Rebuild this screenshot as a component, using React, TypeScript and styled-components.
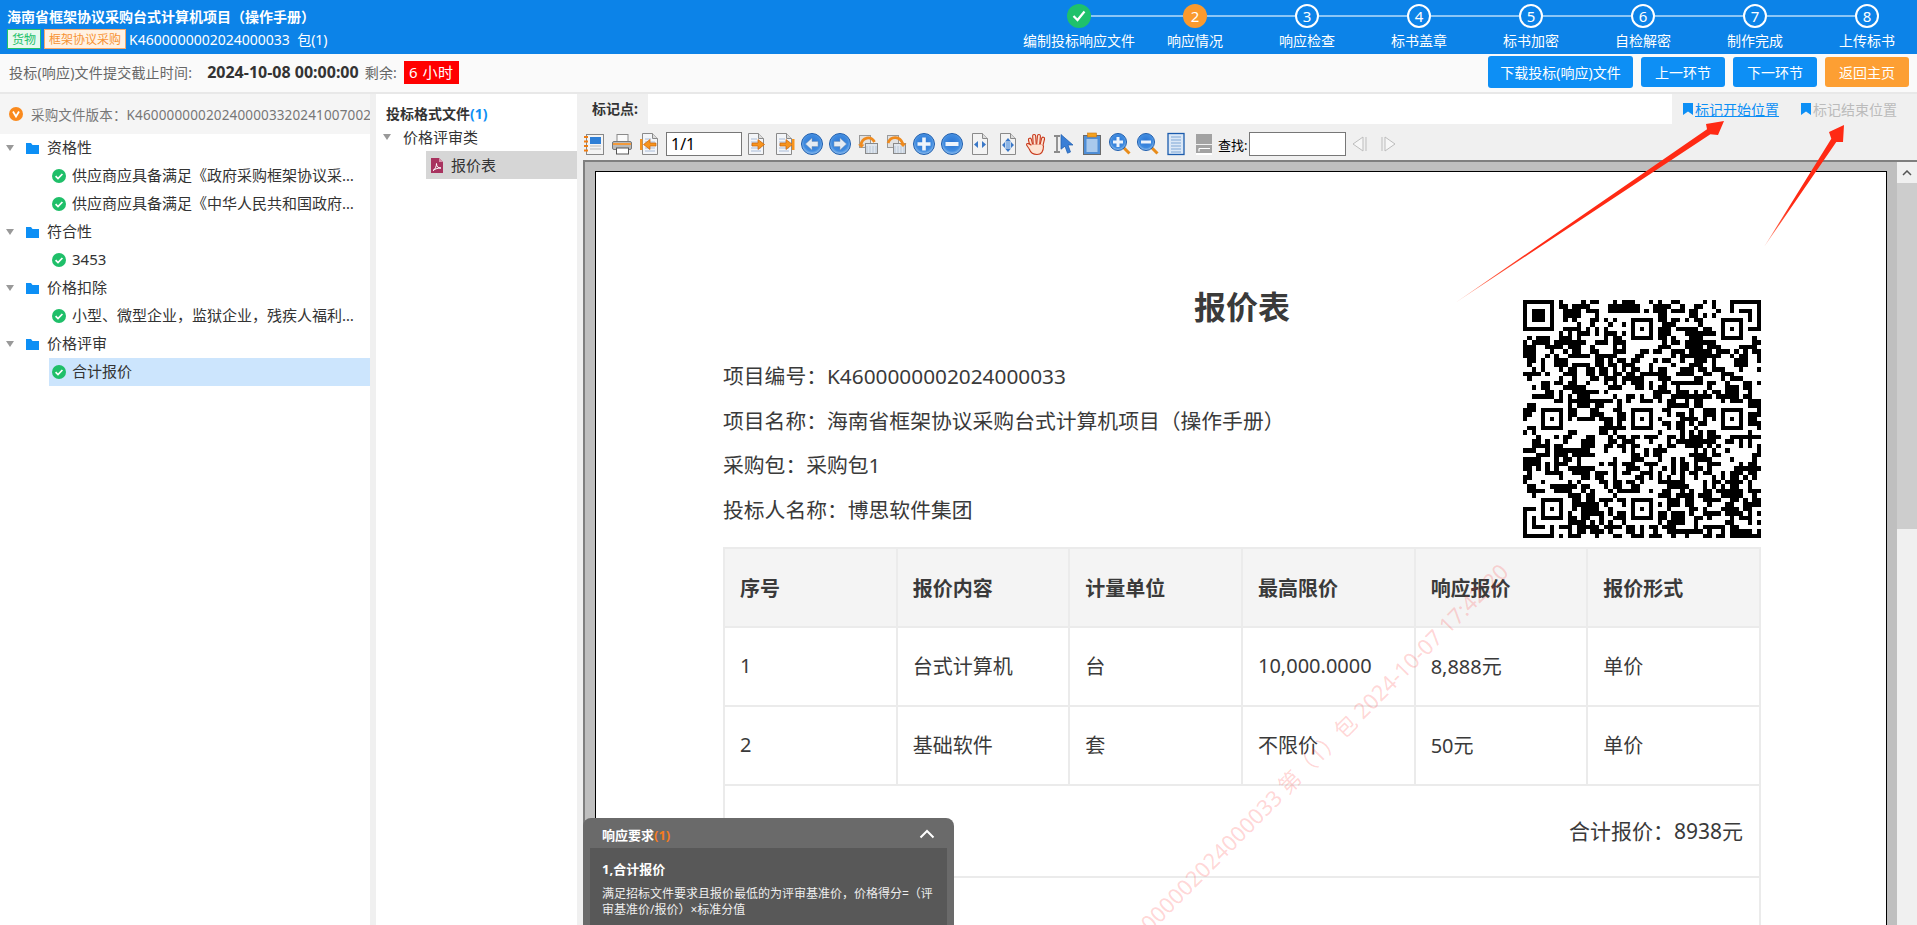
import React from 'react';
import styled, { createGlobalStyle } from 'styled-components';

const GlobalStyle = createGlobalStyle`
    html, body, #root {
        margin: 0;
        height: 100%;
    }
    body {
        font-family: "Noto Sans", "Noto Sans CJK SC", sans-serif;
        color: #333;
        background: #fff;
        overflow: hidden;
    }
    * {
        box-sizing: border-box;
    }
`;

const Shell = styled.div`
    position: relative;
    display: flex;
    flex-direction: column;
    height: 100vh;
    overflow: hidden;
`;

/* ---------- top bar ---------- */

const TopBar = styled.header`
    display: flex;
    flex: none;
    height: 54px;
    background: #0c83e8;
    color: #fff;
`;

const TitleBlock = styled.div`
    display: flex;
    flex-direction: column;
    padding: 7px 0 0 7px;
`;

const ProjectTitle = styled.div`
    font-size: 14px;
    font-weight: 700;
    line-height: 20px;
    white-space: nowrap;
`;

const TagRow = styled.div`
    display: flex;
    align-items: center;
    margin-top: 2px;
    height: 20px;
`;

const Tag = styled.span<{ $tone: 'green' | 'orange' }>`
    display: flex;
    align-items: center;
    height: 20px;
    padding: 0 4px;
    margin-right: 3px;
    font-size: 12px;
    border: 1px solid ${props => props.$tone === 'green' ? '#1fc16b' : '#f9a869'};
    background: ${props => props.$tone === 'green' ? '#e8f9ef' : '#fff2e4'};
    color: ${props => props.$tone === 'green' ? '#1fc16b' : '#f79233'};
`;

const ProjectNo = styled.span`
    font-size: 14px;
    white-space: pre;
`;

const Steps = styled.ol`
    display: flex;
    flex: none;
    list-style: none;
    margin: 0 -6px 0 auto;
    padding: 4px 0 0;
`;

const Step = styled.li`
    position: relative;
    display: flex;
    flex-direction: column;
    align-items: center;
    width: 112px;
    &:first-child {
        margin-right: 4px;
    }
    &:not(:last-child)::after {
        content: '';
        position: absolute;
        top: 11px;
        left: 68px;
        width: 88px;
        height: 2px;
        background: #8cc6f6;
    }
    &:first-child::after {
        width: 92px;
    }
`;

const StepDot = styled.span<{ $state: 'done' | 'active' | 'todo' }>`
    display: flex;
    align-items: center;
    justify-content: center;
    width: 24px;
    height: 24px;
    border-radius: 50%;
    font-size: 15px;
    line-height: 1;
    border: ${props => props.$state === 'todo' ? '2px solid #fff' : 'none'};
    background: ${props => props.$state === 'done' ? '#1fc16b' : props.$state === 'active' ? '#fa9a2e' : 'transparent'};
`;

const StepLabel = styled.span`
    margin-top: 3px;
    font-size: 14px;
    line-height: 20px;
    white-space: nowrap;
`;

/* ---------- deadline bar ---------- */

const DeadlineBar = styled.div`
    display: flex;
    align-items: center;
    flex: none;
    height: 40px;
    padding: 0 8px 2px 9px;
    background: #fafafa;
    border-bottom: 2px solid #e8e8e8;
`;

const DeadlineLabel = styled.span`
    font-size: 14px;
    letter-spacing: 0.2px;
    color: #666;
    white-space: nowrap;
`;

const DeadlineTime = styled.strong`
    margin: 0 6px 0 15px;
    font-size: 16px;
    color: #333;
    white-space: nowrap;
`;

const Remain = styled.span`
    margin-left: 7px;
    padding: 0 5px;
    height: 23px;
    line-height: 23px;
    font-size: 15px;
    letter-spacing: 0.5px;
    color: #fff;
    background: #ff0000;
    white-space: pre;
`;

const BarButtons = styled.div`
    display: flex;
    align-items: center;
    gap: 8px;
    margin-left: auto;
`;

const BarButton = styled.button<{ $width: number; $orange?: boolean }>`
    width: ${props => props.$width}px;
    height: ${props => props.$width > 100 ? 32 : 30}px;
    padding: 0;
    border: none;
    border-radius: 3px;
    font-family: inherit;
    font-size: 14px;
    color: #fff;
    background: ${props => props.$orange ? '#fd9f33' : '#0d8ff5'};
`;

/* ---------- main columns ---------- */

const Columns = styled.main`
    display: flex;
    flex: 1;
    min-height: 0;
`;

const LeftPanel = styled.section`
    flex: none;
    width: 370px;
    overflow: hidden;
`;

const Splitter = styled.div`
    flex: none;
    width: 6px;
    background: #f0f0f0;
`;

const VersionRow = styled.div`
    display: flex;
    align-items: center;
    height: 40px;
    padding-left: 9px;
    gap: 8px;
    background: #f5f5f5;
    font-size: 13.5px;
    letter-spacing: 0.15px;
    color: #777;
    white-space: nowrap;
`;

const GroupRow = styled.div`
    display: flex;
    align-items: center;
    height: 28px;
    padding-left: 6px;
    font-size: 15px;
    line-height: 20px;
`;

const Caret = styled.span`
    width: 0;
    height: 0;
    margin-right: 12px;
    border-left: 4.5px solid transparent;
    border-right: 4.5px solid transparent;
    border-top: 6px solid #999;
`;

const GroupLabel = styled.span`
    margin: 0 0 2px 8px;
`;

const LeafRow = styled.div<{ $active?: boolean }>`
    display: flex;
    align-items: center;
    height: 28px;
    margin-left: 49px;
    padding-left: 3px;
    font-size: 15px;
    line-height: 20px;
    background: ${props => props.$active ? '#cce5fd' : 'transparent'};
`;

const LeafLabel = styled.span`
    margin: 0 0 2px 6px;
    max-width: 283px;
    overflow: hidden;
    white-space: nowrap;
    text-overflow: ellipsis;
`;

const MidPanel = styled.section`
    flex: none;
    width: 201px;
    padding-top: 10px;
`;

const MidTitle = styled.div`
    padding-left: 10px;
    font-size: 14px;
    font-weight: 700;
    line-height: 19px;
    span {
        color: #0d8ff5;
    }
`;

const MidGroup = styled.div`
    display: flex;
    align-items: center;
    height: 28px;
    padding-left: 7px;
    font-size: 15px;
    line-height: 20px;
`;

const FileRow = styled.div`
    display: flex;
    align-items: center;
    height: 28px;
    margin-left: 50px;
    padding-left: 5px;
    gap: 8px;
    font-size: 15px;
    line-height: 20px;
    background: #d6d6d6;
`;

/* ---------- document side ---------- */

const RightPanel = styled.section`
    position: relative;
    display: flex;
    flex-direction: column;
    flex: 1;
    min-width: 0;
    background: #f0f0f0;
`;

const MarkBar = styled.div`
    display: flex;
    flex: none;
    height: 30px;
`;

const MarkLabel = styled.div`
    width: 71px;
    padding-left: 15px;
    font-size: 14px;
    font-weight: 700;
    line-height: 30px;
    white-space: nowrap;
`;

const MarkField = styled.div`
    flex: 1;
    background: #fff;
`;

const MarkLinks = styled.div`
    display: flex;
    width: 245px;
    padding: 6px 0 0 11px;
    gap: 22px;
`;

const MarkLink = styled.a<{ $disabled?: boolean }>`
    display: flex;
    align-items: flex-start;
    gap: 2px;
    height: 21px;
    font-size: 14px;
    line-height: 20px;
    white-space: nowrap;
    color: ${props => props.$disabled ? '#bbb' : '#0d8ff5'};
    text-decoration: ${props => props.$disabled ? 'none' : 'underline'};
    svg {
        margin-top: 3px;
    }
`;

const PdfToolbar = styled.div`
    display: flex;
    align-items: center;
    flex: none;
    height: 36px;
    padding: 4px 0 0 3px;
`;

const ToolSlot = styled.span`
    display: flex;
    align-items: center;
    justify-content: center;
    flex: none;
    width: 28px;
    height: 26px;
`;

const ToolInput = styled.input<{ $width: number }>`
    flex: none;
    width: ${props => props.$width}px;
    height: 24px;
    margin-left: 2px;
    padding: 0 4px;
    border: 1px solid #777;
    font-family: inherit;
    font-size: 16px;
    color: #000;
    background: #fff;
    outline: none;
`;

const FindLabel = styled.span`
    flex: none;
    width: 29px;
    font-size: 13px;
    color: #000;
    white-space: nowrap;
`;

const Viewer = styled.div`
    display: flex;
    flex: 1;
    min-height: 0;
    margin-left: 6px;
    background: #bfbfbf;
    border-top: 2px solid #7f7f7f;
    border-left: 2px solid #7f7f7f;
`;

const PageArea = styled.div`
    flex: 1;
    min-width: 0;
    padding: 9px 10px 0 10px;
    overflow: hidden;
`;

const Page = styled.article`
    position: relative;
    height: 1000px;
    padding: 115px 125px 0 127px;
    background: #fff;
    border: 1px solid #000;
    overflow: hidden;
    color: #3a3a3a;
`;

const DocHead = styled.div`
    display: grid;
    grid-template-columns: 1fr 238px;
    grid-template-rows: 40px auto;
`;

const DocTitle = styled.h1`
    grid-column: 1 / -1;
    grid-row: 1;
    margin: 0;
    font-size: 32px;
    font-weight: 700;
    line-height: 40px;
    text-align: center;
`;

const QrBox = styled.div`
    grid-column: 2;
    grid-row: 1 / span 2;
    width: 238px;
    height: 238px;
    margin-top: 13px;
`;

const DocInfo = styled.div`
    grid-column: 1;
    grid-row: 2;
    padding-top: 27px;
    font-size: 20.8px;
    line-height: 44.5px;
    white-space: nowrap;
`;

const PriceTable = styled.table`
    width: 100%;
    margin-top: 9px;
    border-collapse: collapse;
    table-layout: fixed;
    font-size: 20px;
    color: #3a3a3a;
    th, td {
        height: 79px;
        padding: 0 15px;
        border: 2px solid #ebebeb;
        text-align: left;
    }
    td {
        padding-bottom: 3px;
    }
    th {
        background: #f4f4f4;
        font-weight: 700;
    }
`;

const TotalCell = styled.td`
    && {
        height: 92px;
        font-size: 21px;
        text-align: right;
        padding-right: 16px;
    }
`;

const BlankCell = styled.td`
    && {
        height: 200px;
    }
`;

const Watermark = styled.div`
    position: absolute;
    top: 382px;
    right: 382px;
    font-size: 22px;
    line-height: 26px;
    color: rgba(255, 50, 50, 0.2);
    white-space: pre;
    transform: rotate(-45deg);
    transform-origin: right center;
    pointer-events: none;
`;

const Scrollbar = styled.div`
    display: flex;
    flex-direction: column;
    flex: none;
    width: 20px;
    background: #f0f0f0;
`;

const ScrollUp = styled.div`
    display: flex;
    align-items: center;
    justify-content: center;
    height: 21px;
`;

const ScrollThumb = styled.div`
    height: 346px;
    background: #cdcdcd;
`;

const Popup = styled.aside`
    position: absolute;
    left: 6px;
    bottom: 0;
    width: 371px;
    height: 107px;
    padding: 0 7px;
    border-radius: 8px 8px 0 0;
    background: #6a6a6a;
    color: #fff;
    overflow: hidden;
`;

const PopupHead = styled.div`
    display: flex;
    align-items: center;
    justify-content: space-between;
    height: 30px;
    padding: 2px 12px 0 12px;
    font-size: 13px;
    font-weight: 700;
    span {
        color: #f57c1f;
    }
`;

const PopupBody = styled.div`
    height: 77px;
    padding: 11px 12px 0 12px;
    background: #585858;
`;

const PopupTitle = styled.div`
    font-size: 13px;
    font-weight: 700;
    line-height: 20px;
`;

const PopupText = styled.div`
    margin-top: 7px;
    font-size: 12px;
    line-height: 16px;
    color: #eee;
`;

const ArrowLayer = styled.svg`
    position: absolute;
    top: 0;
    left: 0;
    width: 100%;
    height: 100%;
    pointer-events: none;
`;

const HiddenDefs = styled.svg`
    flex: none;
    width: 0;
    height: 0;
`;

/* ---------- drawings ---------- */

function CheckBadge() {
    return (
        <svg width="14" height="14" viewBox="0 0 14 14" style={{ flex: 'none' }}>
            <circle cx="7" cy="7" r="7" fill="#1fbf69" />
            <path d="M3.6 7.2l2.4 2.4 4.4-4.6" fill="none" stroke="#fff" strokeWidth="1.7" />
        </svg>
    );
}

function FolderIcon() {
    return (
        <svg width="13" height="11" viewBox="0 0 13 11">
            <path d="M0 0h5l1.5 2H13v9H0z" fill="#0d8ff5" />
        </svg>
    );
}

function PdfIcon() {
    return (
        <svg width="12" height="15" viewBox="0 0 12 15">
            <path d="M0 0h8l4 4v11H0z" fill="#a8335f" />
            <path d="M8 0v4h4z" fill="#d893ac" />
            <path d="M2 12.5c2-1 3.5-4 3.5-7 0 3 1.5 4.5 4.5 4.5-3 0-5.5.7-8 2.5z" fill="none" stroke="#fff" strokeWidth="1" />
        </svg>
    );
}

function VersionIcon() {
    return (
        <svg width="14" height="14" viewBox="0 0 14 14" style={{ flex: 'none' }}>
            <circle cx="7" cy="7" r="7" fill="#fa8a1e" />
            <path d="M4 4.5l3 5 3-5" fill="none" stroke="#fff" strokeWidth="1.8" />
        </svg>
    );
}

function BookmarkIcon() {
    return (
        <svg width="10" height="12" viewBox="0 0 10 12" style={{ flex: 'none' }}>
            <path d="M0 0h10v12L5 8.5 0 12z" fill="#0d8ff5" />
        </svg>
    );
}

const docShape = (
    <>
        <path d="M4.5 1.5h10l5 5v16h-15z" fill="#f3f5f8" stroke="#8a8a8a" />
        <path d="M14.5 1.5v5h5" fill="#dcdcdc" stroke="#8a8a8a" />
        <path d="M7 7h6M7 10h10M7 13h10M7 16h10M7 19h10" stroke="#a9bcd8" />
    </>
);

const orangeRight = <path d="M8 11h6V7.5l6.5 5-6.5 5V14H8z" fill="#f7941d" stroke="#c9620a" strokeWidth="0.7" />;
const orangeLeft = <path d="M18 11h-6V7.5l-6.5 5 6.5 5V14h6z" fill="#f7941d" stroke="#c9620a" strokeWidth="0.7" />;
const blueDisc = <circle cx="12" cy="12" r="10.5" fill="url(#tb-blue)" stroke="#1c5cad" />;
const plusGlyph = <path d="M10.2 5.5h3.6v4.7h4.7v3.600h-4.7v4.7h-3.6v-4.7H5.5v-3.6h4.7z" fill="#eef4fb" />;
const minusGlyph = <rect x="5.5" y="10" width="13" height="4" fill="#eef4fb" />;

const stackedDocs = (
    <>
        <rect x="3.5" y="3.5" width="11" height="12" fill="#e2e2e2" stroke="#999" />
        <rect x="9.5" y="11.5" width="12" height="10" fill="#dfe6ee" stroke="#8a8a8a" />
        <path d="M11 14v7M14 14v7M17 14v7M20 14v7" stroke="#b9c6d6" />
    </>
);

const toolIcons: Record<string, React.ReactNode> = {
    bookmarks: (
        <>
            <rect x="4.5" y="2.5" width="17" height="20" fill="#f4f4f4" stroke="#888" />
            <rect x="8" y="5" width="11" height="7" fill="#2f7fd6" />
            <path d="M8 14h11M8 17h11" stroke="#bbb" />
            <path d="M2 5h4M2 9.5h4M2 14h4M2 18.5h4" stroke="#ef7d12" strokeWidth="2" />
        </>
    ),
    print: (
        <>
            <rect x="7" y="2.5" width="11" height="7" fill="#fafafa" stroke="#8a8a8a" />
            <rect x="2.5" y="9.5" width="19" height="8" rx="1.5" fill="#b9b9b9" stroke="#777" />
            <rect x="3" y="11" width="18" height="2" fill="#f39a3a" />
            <rect x="6.5" y="16" width="12" height="6" fill="#fff" stroke="#555" />
        </>
    ),
    first: (
        <>
            {docShape}
            {orangeLeft}
            <rect x="2" y="7" width="2.5" height="11" fill="#f7941d" />
        </>
    ),
    next: (
        <>
            {docShape}
            {orangeRight}
        </>
    ),
    last: (
        <>
            {docShape}
            {orangeRight}
            <rect x="20" y="7" width="2.5" height="11" fill="#f7941d" />
        </>
    ),
    back: (
        <>
            {blueDisc}
            <path d="M5.5 12L12 6v3.5h6v5h-6V18z" fill="#e4ebf3" stroke="#7d94b3" strokeWidth="0.5" />
        </>
    ),
    forward: (
        <>
            {blueDisc}
            <path d="M18.5 12L12 6v3.5H6v5h6V18z" fill="#e4ebf3" stroke="#7d94b3" strokeWidth="0.5" />
        </>
    ),
    undo: (
        <>
            {stackedDocs}
            <path d="M5 13C6 5 15 3.5 18.5 10" fill="none" stroke="#ef8a1d" strokeWidth="2.8" />
            <path d="M2 12.5l3.5 3.5 3-3.5z" fill="#ef8a1d" />
        </>
    ),
    redo: (
        <>
            {stackedDocs}
            <path d="M4 11C7 3.5 16 4 19 12" fill="none" stroke="#ef8a1d" strokeWidth="2.8" />
            <path d="M15.5 11.5l3.5 3.5 3.5-3.5z" fill="#ef8a1d" />
        </>
    ),
    zoomPlus: (
        <>
            {blueDisc}
            {plusGlyph}
        </>
    ),
    zoomMinus: (
        <>
            {blueDisc}
            {minusGlyph}
        </>
    ),
    fitWidth: (
        <>
            <path d="M4.5 1.5h10l5 5v16h-15z" fill="#f3f3f3" stroke="#8a8a8a" />
            <path d="M14.5 1.5v5h5" fill="#dcdcdc" stroke="#8a8a8a" />
            <path d="M10 9v7l-4-3.5zM14 9v7l4-3.5z" fill="#3a78c8" />
        </>
    ),
    fitPage: (
        <>
            <path d="M4.5 1.5h10l5 5v16h-15z" fill="#f3f3f3" stroke="#8a8a8a" />
            <path d="M14.5 1.5v5h5" fill="#dcdcdc" stroke="#8a8a8a" />
            <path d="M12 6l3 3.5H9zM12 20l3-3.5H9zM6 13l3-3v6zM18 13l-3-3v6z" fill="#3a78c8" />
            <rect x="9.5" y="10" width="5" height="6" fill="#8db6e6" />
        </>
    ),
    hand: (
        <g fill="#fde3d2" stroke="#c8391c" strokeWidth="1.1">
            <rect x="5.5" y="6" width="3" height="11" rx="1.5" transform="rotate(-14 7 12)" />
            <rect x="9" y="2.5" width="3" height="12" rx="1.5" transform="rotate(-4 10 9)" />
            <rect x="13" y="2.5" width="3" height="12" rx="1.5" transform="rotate(5 14 9)" />
            <rect x="16.5" y="5" width="3" height="11" rx="1.5" transform="rotate(14 18 11)" />
            <path d="M7 13c-1.5-1.5-4-2-4.5-.8-.5 1 2 3 3 5.3C6.500 20.500 9 22.500 13 22.500c4.500 0 6.500-3 6.500-8.500l-2-1H8z" />
            <path d="M7.5 13.500h11" stroke="#fde3d2" strokeWidth="2" />
        </g>
    ),
    select: (
        <>
            <path d="M2 4h6M2 20h6M5 4v16" fill="none" stroke="#8a8a8a" strokeWidth="1.8" />
            <path d="M9 2.5l12 10.5h-5l2.5 7-3 1.2-2.5-7-4 3z" fill="#3a7fd6" stroke="#1c5cad" strokeWidth="0.7" />
        </>
    ),
    clipboard: (
        <>
            <rect x="3.5" y="3.5" width="17" height="19" fill="#4f8ed6" stroke="#6a6a6a" />
            <rect x="6.5" y="7" width="11" height="13" fill="#a9c9ec" />
            <rect x="7.5" y="1" width="9" height="4" fill="#f4a11f" stroke="#c9791a" strokeWidth="0.6" />
        </>
    ),
    magPlus: (
        <>
            <path d="M15 15l6.5 6.5" stroke="#e88c1a" strokeWidth="3" />
            <circle cx="10" cy="10" r="8.5" fill="url(#tb-blue)" stroke="#1c5cad" />
            <path d="M8.5 5h3v3.5H15v3h-3.5V15h-3v-3.5H5v-3h3.5z" fill="#eef4fb" />
        </>
    ),
    magMinus: (
        <>
            <path d="M15 15l6.5 6.5" stroke="#e88c1a" strokeWidth="3" />
            <circle cx="10" cy="10" r="8.5" fill="url(#tb-blue)" stroke="#1c5cad" />
            <rect x="5" y="8.5" width="10" height="3" fill="#eef4fb" />
        </>
    ),
    page: (
        <>
            <rect x="4" y="1.5" width="16" height="21" fill="#dbe8f7" stroke="#1c5cad" strokeWidth="1.3" />
            <path d="M7 5h10M7 8h10M7 11h10M7 14h10M7 17h10M7 20h10" stroke="#7fa6d6" strokeWidth="1.2" />
        </>
    ),
    split: (
        <>
            <rect x="4" y="2" width="16" height="10" fill="#a2a2a2" />
            <rect x="4" y="13" width="16" height="8" fill="#a2a2a2" />
            <path d="M7 16.5h11M7 16.5v3" stroke="#fff" strokeWidth="1.2" fill="none" />
            <rect x="4" y="21" width="16" height="2" fill="#fff" />
        </>
    ),
    prevMatch: (
        <>
            <path d="M5 12l10-7v14z" fill="#f7f7f7" stroke="#bdbdbd" />
            <path d="M18 5v14" stroke="#bdbdbd" />
        </>
    ),
    nextMatch: (
        <>
            <path d="M19 12L9 5v14z" fill="#f7f7f7" stroke="#bdbdbd" />
            <path d="M6 5v14" stroke="#bdbdbd" />
        </>
    ),
};

function ToolIcon({ name }: { name: string }) {
    return (
        <ToolSlot>
            <svg width="24" height="24" viewBox="0 0 24 24">{toolIcons[name]}</svg>
        </ToolSlot>
    );
}

// the code is only a picture here, so the data cells come from a small seeded generator
function buildQrPath(size: number) {
    let seed = 20241007;
    const next = () => {
        seed = (seed * 1664525 + 1013904223) >>> 0;
        return (seed >>> 16) / 65536;
    };
    const cells: boolean[][] = [];
    for (let y = 0; y < size; y++) {
        cells.push([]);
        for (let x = 0; x < size; x++) {
            const left = x > 0 && cells[y][x - 1];
            const up = y > 0 && cells[y - 1][x];
            cells[y].push(next() < 0.42 + (left ? 0.1 : 0) + (up ? 0.1 : 0));
        }
    }
    const stamp = (ox: number, oy: number, n: number) => {
        for (let y = -1; y <= n; y++) {
            for (let x = -1; x <= n; x++) {
                if (cells[oy + y] === undefined || cells[oy + y][ox + x] === undefined) continue;
                const outside = x < 0 || y < 0 || x === n || y === n;
                const ring = x === 0 || y === 0 || x === n - 1 || y === n - 1;
                const core = n === 7
                    ? x >= 2 && x <= 4 && y >= 2 && y <= 4
                    : x === 2 && y === 2;
                cells[oy + y][ox + x] = !outside && (ring || core);
            }
        }
    };
    stamp(0, 0, 7);
    stamp(size - 7, 0, 7);
    stamp(0, size - 7, 7);
    [[24, 4], [44, 4], [4, 24], [24, 24], [44, 24], [4, 44], [24, 44], [44, 44]].forEach(([x, y]) => {
        if (x + y < size + 20) stamp(x, y, 5);
    });
    let d = '';
    cells.forEach((row, y) => row.forEach((on, x) => {
        if (on) d += `M${x} ${y}h1v1h-1z`;
    }));
    return d;
}

const qrPath = buildQrPath(53);

/* ---------- data ---------- */

const steps = ['编制投标响应文件', '响应情况', '响应检查', '标书盖章', '标书加密', '自检解密', '制作完成', '上传标书'];

const tree = [
    {
        label: '资格性',
        leaves: [
            '供应商应具备满足《政府采购框架协议采购方式管理暂行办法》的规定',
            '供应商应具备满足《中华人民共和国政府采购法》第二十二条的规定',
        ],
    },
    { label: '符合性', leaves: ['3453'] },
    { label: '价格扣除', leaves: ['小型、微型企业，监狱企业，残疾人福利性单位价格扣除'] },
    { label: '价格评审', leaves: ['合计报价'] },
];

const toolsA = ['bookmarks', 'print', 'first'];
const toolsB = ['next', 'last', 'back', 'forward', 'undo', 'redo', 'zoomPlus', 'zoomMinus', 'fitWidth', 'fitPage', 'hand', 'select', 'clipboard', 'magPlus', 'magMinus', 'page', 'split'];

const priceRows = [
    ['1', '台式计算机', '台', '10,000.0000', '8,888元', '单价'],
    ['2', '基础软件', '套', '不限价', '50元', '单价'],
];

export default function App() {
    return (
        <Shell>
            <GlobalStyle />
            <TopBar>
                <TitleBlock>
                    <ProjectTitle>海南省框架协议采购台式计算机项目（操作手册）</ProjectTitle>
                    <TagRow>
                        <Tag $tone="green">货物</Tag>
                        <Tag $tone="orange">框架协议采购</Tag>
                        <ProjectNo>K4600000002024000033  包(1)</ProjectNo>
                    </TagRow>
                </TitleBlock>
                <Steps>
                    {steps.map((label, i) => (
                        <Step key={label}>
                            <StepDot $state={i === 0 ? 'done' : i === 1 ? 'active' : 'todo'}>
                                {i === 0 ? (
                                    <svg width="14" height="12" viewBox="0 0 14 12">
                                        <path d="M1.5 6l4 4 7-8.5" fill="none" stroke="#fff" strokeWidth="2.2" />
                                    </svg>
                                ) : i + 1}
                            </StepDot>
                            <StepLabel>{label}</StepLabel>
                        </Step>
                    ))}
                </Steps>
            </TopBar>

            <DeadlineBar>
                <DeadlineLabel>投标(响应)文件提交截止时间:</DeadlineLabel>
                <DeadlineTime>2024-10-08 00:00:00</DeadlineTime>
                <DeadlineLabel>剩余:</DeadlineLabel>
                <Remain>6 小时</Remain>
                <BarButtons>
                    <BarButton $width={145}>下载投标(响应)文件</BarButton>
                    <BarButton $width={84}>上一环节</BarButton>
                    <BarButton $width={84}>下一环节</BarButton>
                    <BarButton $width={84} $orange>返回主页</BarButton>
                </BarButtons>
            </DeadlineBar>

            <Columns>
                <LeftPanel>
                    <VersionRow>
                        <VersionIcon />
                        采购文件版本：K460000000202400003320241007002
                    </VersionRow>
                    {tree.map(group => (
                        <div key={group.label}>
                            <GroupRow>
                                <Caret />
                                <FolderIcon />
                                <GroupLabel>{group.label}</GroupLabel>
                            </GroupRow>
                            {group.leaves.map(leaf => (
                                <LeafRow key={leaf} $active={leaf === '合计报价'}>
                                    <CheckBadge />
                                    <LeafLabel>{leaf}</LeafLabel>
                                </LeafRow>
                            ))}
                        </div>
                    ))}
                </LeftPanel>
                <Splitter />
                <MidPanel>
                    <MidTitle>投标格式文件<span>(1)</span></MidTitle>
                    <MidGroup>
                        <Caret />
                        价格评审类
                    </MidGroup>
                    <FileRow>
                        <PdfIcon />
                        报价表
                    </FileRow>
                </MidPanel>

                <RightPanel>
                    <MarkBar>
                        <MarkLabel>标记点:</MarkLabel>
                        <MarkField />
                        <MarkLinks>
                            <MarkLink><BookmarkIcon />标记开始位置</MarkLink>
                            <MarkLink $disabled><BookmarkIcon />标记结束位置</MarkLink>
                        </MarkLinks>
                    </MarkBar>
                    <PdfToolbar>
                        <HiddenDefs aria-hidden="true">
                            <defs>
                                <radialGradient id="tb-blue" cx="50%" cy="45%" r="55%">
                                    <stop offset="0%" stopColor="#2b74d2" />
                                    <stop offset="70%" stopColor="#3f8be0" />
                                    <stop offset="100%" stopColor="#9cc6f0" />
                                </radialGradient>
                            </defs>
                        </HiddenDefs>
                        {toolsA.map(name => <ToolIcon key={name} name={name} />)}
                        <ToolInput $width={76} value="1/1" readOnly />
                        {toolsB.map(name => <ToolIcon key={name} name={name} />)}
                        <FindLabel>查找:</FindLabel>
                        <ToolInput $width={97} value="" readOnly />
                        <ToolIcon name="prevMatch" />
                        <ToolIcon name="nextMatch" />
                    </PdfToolbar>
                    <Viewer>
                        <PageArea>
                            <Page>
                                <DocHead>
                                    <DocTitle>报价表</DocTitle>
                                    <QrBox>
                                        <svg width="238" height="238" viewBox="0 0 53 53" shapeRendering="crispEdges">
                                            <path d={qrPath} fill="#000" />
                                        </svg>
                                    </QrBox>
                                    <DocInfo>
                                        <div>项目编号：K4600000002024000033</div>
                                        <div>项目名称：海南省框架协议采购台式计算机项目（操作手册）</div>
                                        <div>采购包：采购包1</div>
                                        <div>投标人名称：博思软件集团</div>
                                    </DocInfo>
                                </DocHead>
                                <PriceTable>
                                    <thead>
                                        <tr>
                                            <th>序号</th>
                                            <th>报价内容</th>
                                            <th>计量单位</th>
                                            <th>最高限价</th>
                                            <th>响应报价</th>
                                            <th>报价形式</th>
                                        </tr>
                                    </thead>
                                    <tbody>
                                        {priceRows.map(row => (
                                            <tr key={row[0]}>
                                                {row.map((cell, i) => <td key={i}>{cell}</td>)}
                                            </tr>
                                        ))}
                                        <tr>
                                            <TotalCell colSpan={6}>合计报价：8938元</TotalCell>
                                        </tr>
                                        <tr>
                                            <BlankCell colSpan={6} />
                                        </tr>
                                    </tbody>
                                </PriceTable>
                                <Watermark>K4600000002024000033 第（1）包 2024-10-07 17:42:20</Watermark>
                            </Page>
                        </PageArea>
                        <Scrollbar>
                            <ScrollUp>
                                <svg width="10" height="6" viewBox="0 0 10 6">
                                    <path d="M1 5l4-4 4 4" fill="none" stroke="#555" strokeWidth="1.5" />
                                </svg>
                            </ScrollUp>
                            <ScrollThumb />
                        </Scrollbar>
                    </Viewer>
                    <Popup>
                        <PopupHead>
                            <div>响应要求<span>(1)</span></div>
                            <svg width="16" height="10" viewBox="0 0 16 10">
                                <path d="M1.5 8.5L8 2l6.5 6.5" fill="none" stroke="#fff" strokeWidth="2" />
                            </svg>
                        </PopupHead>
                        <PopupBody>
                            <PopupTitle>1,合计报价</PopupTitle>
                            <PopupText>满足招标文件要求且报价最低的为评审基准价，价格得分=（评审基准价/报价）×标准分值</PopupText>
                        </PopupBody>
                    </Popup>
                </RightPanel>
            </Columns>

            <ArrowLayer viewBox="0 0 1917 925" aria-hidden="true">
                <defs>
                    <linearGradient id="arrow-a" gradientUnits="userSpaceOnUse" x1="1455" y1="303" x2="1724" y2="121">
                        <stop offset="0%" stopColor="#ffc4b8" />
                        <stop offset="12%" stopColor="#ff5a40" />
                        <stop offset="30%" stopColor="#ff2a14" />
                    </linearGradient>
                    <linearGradient id="arrow-b" gradientUnits="userSpaceOnUse" x1="1764" y1="247" x2="1844" y2="125">
                        <stop offset="0%" stopColor="#ffc4b8" />
                        <stop offset="15%" stopColor="#ff5a40" />
                        <stop offset="35%" stopColor="#ff2a14" />
                    </linearGradient>
                </defs>
                <path d="M1455 303L1707 129.2L1706 124L1724 121L1718 135L1710.4 134.2Z" fill="url(#arrow-a)" />
                <path d="M1764 247L1831.3 138.7L1829 132L1844 125L1843 142L1836.3 141.9Z" fill="url(#arrow-b)" />
            </ArrowLayer>
        </Shell>
    );
}
